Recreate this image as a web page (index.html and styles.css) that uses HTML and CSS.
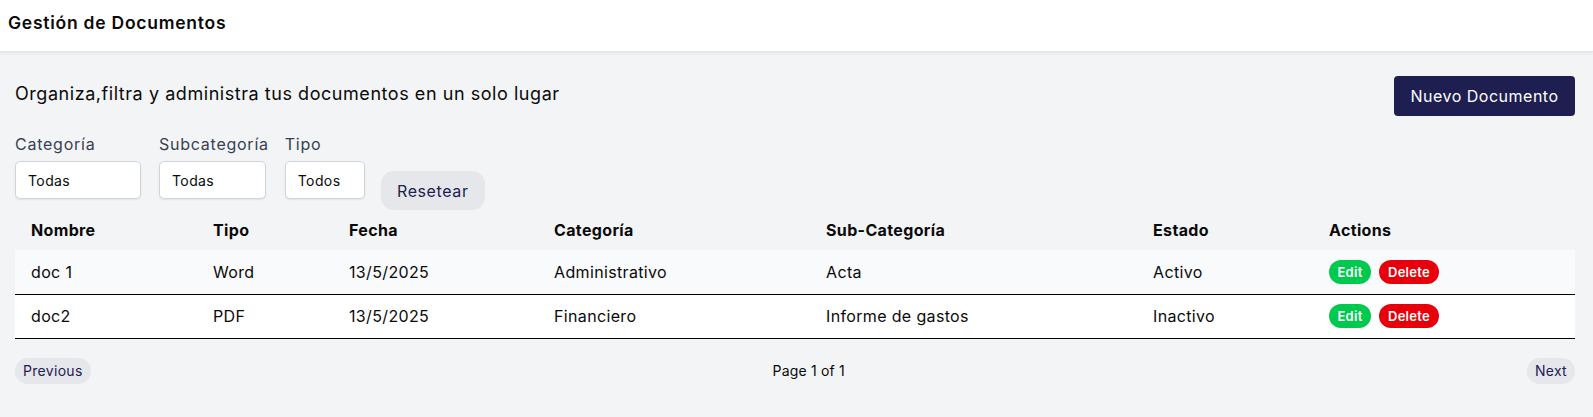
FILE: index.html
```html
<!DOCTYPE html>
<html lang="es">
<head>
<meta charset="utf-8">
<title>Gestión de Documentos</title>
<link rel="stylesheet" href="styles.css">
</head>
<body>
<header class="topbar">
  <h1 class="topbar-title">Gestión de Documentos</h1>
</header>
<main class="main">
  <div class="intro">
    <p class="intro-text">Organiza,filtra y administra tus documentos en un solo lugar</p>
    <button class="btn-primary">Nuevo Documento</button>
  </div>
  <div class="filters">
    <div class="filter filter-cat">
      <label class="filter-label">Categoría</label>
      <div class="select">Todas</div>
    </div>
    <div class="filter filter-sub">
      <label class="filter-label">Subcategoría</label>
      <div class="select">Todas</div>
    </div>
    <div class="filter filter-tipo">
      <label class="filter-label">Tipo</label>
      <div class="select">Todos</div>
    </div>
    <button class="btn-reset">Resetear</button>
  </div>
  <table class="docs">
    <colgroup>
      <col class="c1"><col class="c2"><col class="c3"><col class="c4"><col class="c5"><col class="c6"><col class="c7">
    </colgroup>
    <thead>
      <tr><th>Nombre</th><th>Tipo</th><th>Fecha</th><th>Categoría</th><th>Sub-Categoría</th><th>Estado</th><th>Actions</th></tr>
    </thead>
    <tbody>
      <tr class="row-alt">
        <td>doc 1</td><td>Word</td><td>13/5/2025</td><td>Administrativo</td><td>Acta</td><td>Activo</td>
        <td><span class="actions"><button class="btn-edit">Edit</button><button class="btn-delete">Delete</button></span></td>
      </tr>
      <tr>
        <td>doc2</td><td>PDF</td><td>13/5/2025</td><td>Financiero</td><td>Informe de gastos</td><td>Inactivo</td>
        <td><span class="actions"><button class="btn-edit">Edit</button><button class="btn-delete">Delete</button></span></td>
      </tr>
    </tbody>
  </table>
  <nav class="pager">
    <button class="btn-page">Previous</button>
    <span class="page-info">Page 1 of 1</span>
    <button class="btn-page">Next</button>
  </nav>
</main>
</body>
</html>
```
FILE: styles.css
```css
* { box-sizing: border-box; }
html, body { margin: 0; padding: 0; }
body {
  background: #f3f4f6;
  font-family: "Inter", "Noto Sans", sans-serif;
  color: #0a0a0a;
  height: 417px;
  overflow: hidden;
}
button { font-family: inherit; cursor: pointer; border: 0; }

.topbar {
  background: #fff;
  height: 52px;
  border-bottom: 1px solid #e5e7eb;
  box-shadow: 0 1px 3px rgba(0,0,0,0.08);
  padding: 9px 8px 0;
}
.topbar-title {
  margin: 0;
  font-size: 17.5px;
  line-height: 28px;
  font-weight: 600;
  letter-spacing: 0.75px;
  color: #0a0a0a;
}

.main { padding: 0 18px 0 15px; }

.intro {
  margin-top: 24px;
  display: flex;
  justify-content: space-between;
  align-items: flex-start;
}
.intro-text {
  margin: 4px 0 0;
  font-size: 18px;
  line-height: 28px;
  letter-spacing: 0.55px;
}
.btn-primary {
  background: #1e1e50;
  color: #fff;
  font-size: 16px;
  letter-spacing: 0.5px;
  height: 40px;
  width: 181px;
  border-radius: 4px;
}

.filters {
  margin-top: 16px;
  display: flex;
  align-items: flex-start;
}
.filter { display: flex; flex-direction: column; margin-right: 16px; }
.filter-cat { margin-right: 18px; }
.filter-label {
  font-size: 16px;
  line-height: 24px;
  letter-spacing: 0.75px;
  color: #364153;
  margin-bottom: 5px;
}
.select {
  background: #fff;
  border: 1px solid #d1d5dc;
  border-radius: 5px;
  box-shadow: 0 1px 2px rgba(0,0,0,0.08);
  height: 38px;
  padding: 0 12px;
  display: flex;
  align-items: center;
  font-size: 14px;
  letter-spacing: 0.4px;
}
.filter-cat .select { width: 126px; }
.filter-sub .select { width: 107px; }
.filter-tipo .select { width: 80px; }
.btn-reset {
  margin-top: 39px;
  background: #e5e7eb;
  color: #1e2050;
  font-size: 16px;
  letter-spacing: 0.6px;
  height: 39px;
  width: 104px;
  border-radius: 13px;
}

.docs {
  width: 100%;
  border-collapse: collapse;
  table-layout: fixed;
}
.c1 { width: 182px; }
.c2 { width: 136px; }
.c3 { width: 205px; }
.c4 { width: 272px; }
.c5 { width: 327px; }
.c6 { width: 176px; }
.c7 { width: 262px; }
.docs th {
  text-align: left;
  font-size: 16px;
  font-weight: 700;
  letter-spacing: 0.35px;
  height: 40px;
  padding: 0 16px;
}
.docs td {
  font-size: 16px;
  letter-spacing: 0.35px;
  height: 44px;
  padding: 0 16px;
  background: #fff;
  border-bottom: 1px solid #000;
}
.docs .row-alt td { background: #f9fafb; }
.actions { display: flex; gap: 8px; }
.btn-edit, .btn-delete {
  color: #fff;
  font-size: 13px;
  font-weight: 600;
  letter-spacing: 0.3px;
  height: 24px;
  border-radius: 12px;
  padding: 0;
}
.btn-edit { background: #00c950; width: 42px; }
.btn-delete { background: #e7000b; width: 60px; }

.pager {
  margin-top: 19px;
  display: flex;
  justify-content: space-between;
  align-items: center;
}
.btn-page {
  background: #e5e7eb;
  color: #1e2050;
  font-size: 14px;
  letter-spacing: 0.3px;
  height: 26px;
  padding: 0 8px;
  border-radius: 13px;
}
.page-info { font-size: 14px; letter-spacing: 0.2px; }
```
